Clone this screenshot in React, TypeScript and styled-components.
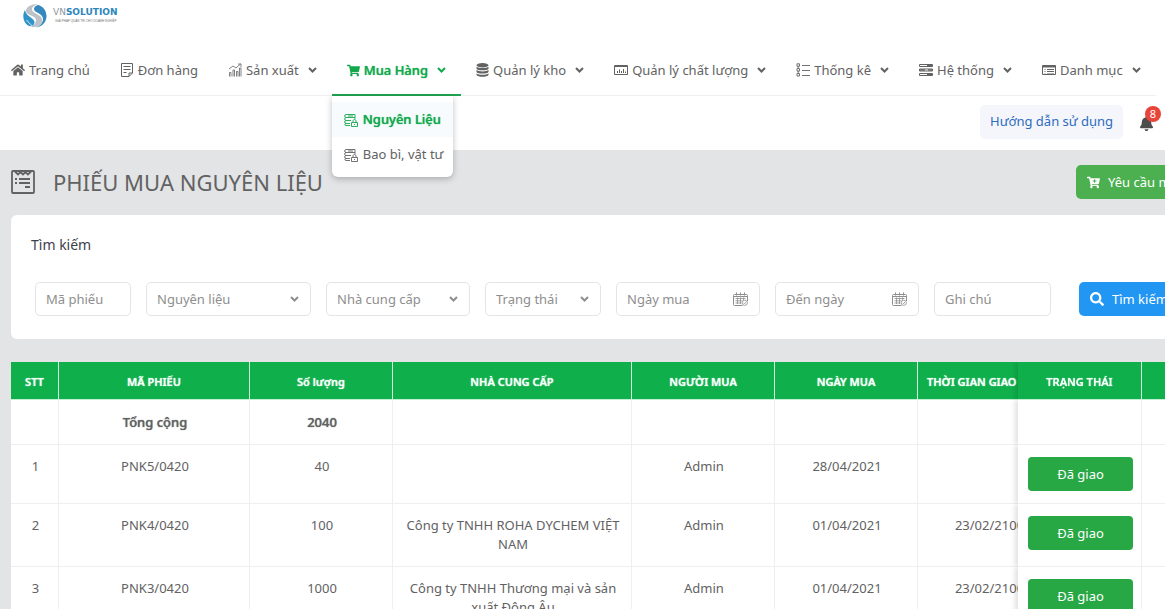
import React from "react";
import styled, { createGlobalStyle, css } from "styled-components";
import { FaHome, FaShoppingCart, FaBell, FaSearch, FaCartPlus } from "react-icons/fa";

const Global = createGlobalStyle`
  *, *::before, *::after { box-sizing: border-box; }
  body {
    margin: 0;
    background: #e2e4e6;
    color: #626262;
    font-family: "Noto Sans", "Open Sans", sans-serif;
    font-size: 13px;
    line-height: 19px;
  }
  button, input, select { font: inherit; }
  a { color: inherit; text-decoration: none; }
`;

const heavy = css`
  font-weight: 500;
  text-shadow: 0 0 1px currentColor;
`;

const Page = styled.div`
  overflow-x: hidden;
`;

const Header = styled.header`
  background: #fff;
`;

const Brand = styled.a`
  display: flex;
  align-items: center;
  gap: 6px;
  height: 44px;
  padding: 0 23px 13px;
`;

const BrandText = styled.span`
  display: flex;
  flex-direction: column;
  gap: 2px;
`;

const BrandName = styled.span`
  color: #8f969d;
  font: 9px/9px "DejaVu Sans", sans-serif;
  b { color: #2c86bb; }
`;

const BrandTag = styled.span`
  color: #777;
  font: 3px/4px "Liberation Sans", sans-serif;
  padding-left: 2px;
`;

const Nav = styled.nav`
  display: flex;
  height: 52px;
  margin: 0 9px 0 -4px;
  border-bottom: 1px solid #eef0f2;
`;

const NavItem = styled.div`
  position: relative;
  flex: none;
`;

const NavLink = styled.a<{ $active?: boolean }>`
  display: flex;
  align-items: center;
  gap: 4px;
  height: 52px;
  padding: 2px 15px 0;
  white-space: nowrap;
  border-bottom: 2px solid transparent;
  ${(p) => p.$active && css`
    ${heavy}
    color: #14a84c;
    border-color: #1fa550;
  `}
`;

const Chevron = styled.svg`
  flex: none;
  width: 9px;
  height: 6px;
  fill: none;
  stroke: currentColor;
  stroke-width: 2;
  margin-left: 5px;
`;

const Menu = styled.div`
  position: absolute;
  z-index: 5;
  top: 52px;
  left: 0;
  padding: 6px 0 5px;
  background: #fff;
  border-radius: 0 0 6px 6px;
  box-shadow: 0 2px 6px rgba(0, 0, 0, 0.25);
`;

const MenuLink = styled.a<{ $active?: boolean }>`
  display: flex;
  align-items: center;
  gap: 5px;
  height: 35px;
  padding: 0 10px 0 12px;
  white-space: nowrap;
  ${(p) => p.$active && css`
    ${heavy}
    color: #14a84c;
    background: #f7fbfe;
  `}
`;

const Tools = styled.div`
  display: flex;
  justify-content: flex-end;
  align-items: center;
  gap: 16px;
  height: 54px;
  padding: 0 11px 2px 0;
`;

const HelpLink = styled.a`
  padding: 7px 10px 8px;
  border-radius: 5px;
  background: #f5f6fb;
  color: #2d6bc0;
`;

const BellButton = styled.button`
  position: relative;
  display: flex;
  padding: 2px 0 0;
  border: 0;
  background: none;
  color: #4d4d4d;
`;

const Badge = styled.span`
  position: absolute;
  top: -8px;
  right: -7px;
  width: 16px;
  height: 16px;
  border-radius: 8px;
  background: #e8443a;
  color: #fff;
  font-size: 11px;
  line-height: 16px;
  text-align: center;
`;

const Main = styled.main`
  min-width: 1244px;
  padding: 0 11px 24px;
`;

const TitleRow = styled.div`
  display: flex;
  align-items: center;
  gap: 18px;
  height: 65px;
  padding-bottom: 1px;
`;

const Title = styled.h1`
  flex: 1;
  margin: 0;
  font-size: 22px;
  line-height: 30px;
  font-weight: 400;
`;

const Button = styled.button<{ $color: string; $width: number }>`
  display: flex;
  flex: none;
  align-items: center;
  gap: 8px;
  width: ${(p) => p.$width}px;
  height: 34px;
  padding: 0 11px;
  border: 0;
  border-radius: 5px;
  background: ${(p) => p.$color};
  color: #fff;
  white-space: nowrap;
`;

const SearchCard = styled.section`
  padding: 20px 24px 23px;
  border-radius: 6px;
  background: #fff;
`;

const CardTitle = styled.h2`
  margin: 0 0 28px -4px;
  color: #3c3f4c;
  font-size: 14px;
  line-height: 19px;
  font-weight: 400;
`;

const Filters = styled.form`
  display: flex;
  gap: 15px;
`;

const Field = styled.label<{ $w: number }>`
  position: relative;
  flex: ${(p) => p.$w} 1 ${(p) => p.$w}px;
  min-width: 0;
  color: #8e8e8e;
  svg {
    position: absolute;
    right: 12px;
    top: 50%;
    transform: translateY(-50%);
    pointer-events: none;
  }
`;

const control = css`
  width: 100%;
  height: 34px;
  padding: 0 10px;
  border: 1px solid #e3e4e6;
  border-radius: 5px;
  background: #fff;
  color: #8e8e8e;
  outline: none;
`;

const TextInput = styled.input`
  ${control}
  &::placeholder { color: #8e8e8e; opacity: 1; }
`;

const Select = styled.select`
  ${control}
  appearance: none;
`;

const SubmitSlot = styled.div`
  margin-left: 13px;
`;

const TableScroll = styled.div`
  margin-top: 23px;
  overflow-x: auto;
`;

const Table = styled.table`
  width: 100%;
  min-width: 1264px;
  table-layout: fixed;
  border-collapse: separate;
  border-spacing: 0;
  background: #fff;
`;

const sticky = css<{ $pin?: "status" | "last" }>`
  ${(p) => p.$pin && css`
    position: sticky;
    right: ${p.$pin === "status" ? 91 : 0}px;
  `}
  ${(p) => p.$pin === "status" && css`
    box-shadow: -3px 0 5px rgba(0, 0, 0, 0.12);
    clip-path: inset(0 0 0 -8px);
  `}
`;

const Th = styled.th<{ $pin?: "status" | "last" }>`
  height: 38px;
  padding: 2px 9px 0;
  background: #0fb04c;
  color: #f4fff8;
  border-right: 1px solid #d5f3e0;
  border-bottom: 1px solid #c4eed3;
  font-size: 11px;
  line-height: 18px;
  font-weight: 600;
  text-shadow: 0 0 1px currentColor;
  white-space: nowrap;
  ${sticky}
`;

const Td = styled.td<{ $pin?: "status" | "last" }>`
  padding: 12px 8px 12px 10px;
  border-right: 1px solid #efefef;
  border-bottom: 1px solid #efefef;
  background: #fff;
  text-align: center;
  vertical-align: top;
  ${sticky}
`;

const SumTd = styled(Td)`
  height: 45px;
  padding-top: 13px;
  ${heavy}
`;

const StatusButton = styled.button`
  display: block;
  width: 105px;
  height: 34px;
  border: 0;
  border-radius: 4px;
  background: #28a745;
  color: #fff;
`;

const StrokeIcon = styled.svg`
  flex: none;
  fill: none;
  stroke: currentColor;
`;

const Down = () => (
  <Chevron viewBox="0 0 9 6" aria-hidden="true">
    <path d="M1 1l3.500 3.500L8 1" />
  </Chevron>
);

const NoteIcon = () => (
  <StrokeIcon width="14" height="14" viewBox="0 0 14 14">
    <path d="M9 13.500H1.500v-13h11V10zM9 13.500V10h3.500M3.500 3.500h7M3.500 6.500h7M3.500 9.500h3" />
  </StrokeIcon>
);

const ChartIcon = () => (
  <StrokeIcon width="14" height="14" viewBox="0 0 14 14" strokeWidth="0.8">
    <path d="M1.500 13.500v-4h1.500v4M5 13.500V7h1.500v6.500M8.500 13.500V8.500H10v5M11.500 13.500V5H13v8.500M1 6l4-3 3 2 4.500-4M10 1h3v3" />
  </StrokeIcon>
);

const DiskIcon = () => (
  <svg width="13" height="14" viewBox="0 0 13 14" fill="currentColor" aria-hidden="true">
    <ellipse cx="6.500" cy="2.200" rx="6" ry="2.200" />
    <path d="M.5 3.800c2 1.700 10 1.700 12 0v2c-1 2-11 2-12 0z" />
    <path d="M.5 7.100c2 1.700 10 1.700 12 0v2c-1 2-11 2-12 0z" />
    <path d="M.5 10.400c2 1.700 10 1.700 12 0v1.600c-1 2.400-11 2.400-12 0z" />
  </svg>
);

const RackIcon = () => (
  <StrokeIcon width="14" height="14" viewBox="0 0 14 14">
    <path d="M.5 1.500h13v2H.5zM.5 6h13v2H.5zM.5 10.500h13v2H.5z" />
    <path d="M8 2.500h5M1 7h5M9 7h4M8 11.500h5" strokeWidth="1.500" />
  </StrokeIcon>
);

const QualityIcon = () => (
  <StrokeIcon width="14" height="14" viewBox="0 0 14 14">
    <path d="M.5 2.500h13v9H.5zM.5 3.500h13" />
    <path d="M3.500 10V8M5.500 10V6.500M7.500 10V8M9.500 10V6M11.500 10V8.500" />
  </StrokeIcon>
);

const ListIcon = () => (
  <StrokeIcon width="14" height="14" viewBox="0 0 14 14" strokeWidth="0.9">
    <path d="M1 .8h2.500v2.500H1zM1 5.600h2.500v2.500H1zM1 10.500h2.500V13H1zM2.200 3.300v2.300M2.200 8.100v2.400M6 2.500h8M6 7.500h8M6 12.500h8" />
  </StrokeIcon>
);

const CatalogIcon = () => (
  <StrokeIcon width="14" height="14" viewBox="0 0 14 14">
    <path d="M.5 2.500h13v9H.5z" />
    <path d="M.5 3.500h13" strokeWidth="2" />
    <path d="M2.500 6.500h1M5 6.500h7M2.500 8.500h1M5 8.500h7" />
    <path d="M2.500 10.500h1M5 10.500h7" strokeWidth="0.5" />
  </StrokeIcon>
);

const StockIcon = () => (
  <StrokeIcon width="14" height="14" viewBox="0 0 14 14" strokeWidth="0.9">
    <path d="M11 6V1.500H2C.2 1.500.2 4.500 2 4.500h9M7 7.500H2C.2 7.500.2 4.500 2 4.500M6 10.500H2c-1.800 0-1.800-3 0-3M6 12.500H2c-1.500 0-1.500-2 0-2M4 3h5" />
    <path d="M7.500 9.500h6v4h-6zM9 9.500V8c0-2 3-2 3 0v1.500M10.500 11v1" />
  </StrokeIcon>
);

const CalendarIcon = () => (
  <StrokeIcon width="15" height="14" viewBox="0 0 15 14" strokeWidth="0.8">
    <path d="M9.500 13.500h-8c-.6 0-1-.4-1-1v-9c0-.6.4-1 1-1h12c.6 0 1 .4 1 1V9" strokeWidth="1" />
    <path d="M.5 4.500h14M3.500.500v3M7.500.500v3M11.500.500v3" strokeWidth="1" />
    <path d="M2.500 6.500h10M2.500 8.800h7M2.500 11h6M4.500 5.500v6.500M7.500 5.500v6.500M10.500 5.500v2.500" />
    <circle cx="11.800" cy="10.800" r="2.600" />
    <path d="M10.500 10.800l1 1 1.600-2" />
  </StrokeIcon>
);

const TicketIcon = () => (
  <StrokeIcon width="24" height="24" viewBox="0 0 24 24" strokeWidth="1.800">
    <rect x="1" y="1" width="22" height="22" rx="1" />
    <path d="M4 1.500l3 3 2.500-2.500L12 4.500 14.500 2l2.500 2.500 3-3M4 9h2M8 9h11M4 13h2M8 13h11M14 17h5" />
  </StrokeIcon>
);

const Logo = () => (
  <svg width="24" height="24" viewBox="0 0 24 24" aria-hidden="true">
    <path d="M15 0C8 0 3 3 3 7c0 5 10 4 10 9 0 3-2 5-5 7 7 1 12-3 11-8-1-5-10-5-10-10 0-2 3-4 6-5z" fill="#bcc2c8" />
    <path d="M15 1c-3 1-4 2-4 4 0 4 9 4 9 10 0 4-3 7-7 8.500C19 23 23.500 18 23.500 12 23.500 7 20 2 15 1z" fill="#3588bd" />
    <path d="M2 6c-3 5-2 12 3 15.500 3 2 6 0 6.500-3C12 14 3 13 2 6z" fill="#2f93c8" />
    <path d="M3.500 16c2 3 4 3 5 6" fill="none" stroke="#fff" strokeWidth="0.8" />
  </svg>
);

const NAV = [
  { label: "Trang chủ", icon: <FaHome size={14} /> },
  { label: "Đơn hàng", icon: <NoteIcon /> },
  { label: "Sản xuất", icon: <ChartIcon />, menu: true },
  { label: "Mua Hàng", icon: <FaShoppingCart size={13} />, menu: true, active: true },
  { label: "Quản lý kho", icon: <DiskIcon />, menu: true },
  { label: "Quản lý chất lượng", icon: <QualityIcon />, menu: true },
  { label: "Thống kê", icon: <ListIcon />, menu: true },
  { label: "Hệ thống", icon: <RackIcon />, menu: true },
  { label: "Danh mục", icon: <CatalogIcon />, menu: true },
];

const FILTERS: { label: string; w: number; kind: "text" | "select" | "date" }[] = [
  { label: "Mã phiếu", w: 96, kind: "text" },
  { label: "Nguyên liệu", w: 165, kind: "select" },
  { label: "Nhà cung cấp", w: 144, kind: "select" },
  { label: "Trạng thái", w: 116, kind: "select" },
  { label: "Ngày mua", w: 144, kind: "date" },
  { label: "Đến ngày", w: 144, kind: "date" },
  { label: "Ghi chú", w: 117, kind: "text" },
];

const ROWS = [
  { id: 1, code: "PNK5/0420", qty: 40, supplier: "", date: "28/04/2021", due: "" },
  { id: 2, code: "PNK4/0420", qty: 100, supplier: "Công ty TNHH ROHA DYCHEM VIỆT NAM", date: "01/04/2021", due: "23/02/2100" },
  { id: 3, code: "PNK3/0420", qty: 1000, supplier: "Công ty TNHH Thương mại và sản xuất Đông Âu", date: "01/04/2021", due: "23/02/2100" },
];

const COLUMNS = [48, 191, 143, 239, 143, 143, 142, 124, 91];

export default function App() {
  return (
    <Page>
      <Global />
      <Header>
        <Brand href="#">
          <Logo />
          <BrandText>
            <BrandName>VN<b>SOLUTION</b></BrandName>
            <BrandTag>GIẢI PHÁP QUẢN TRỊ CHO DOANH NGHIỆP</BrandTag>
          </BrandText>
        </Brand>
        <Nav>
          {NAV.map((n) => (
            <NavItem key={n.label}>
              <NavLink href="#" $active={n.active}>
                {n.icon}
                {n.label}
                {n.menu && <Down />}
              </NavLink>
              {n.active && (
                <Menu>
                  <MenuLink href="#" $active><StockIcon />Nguyên Liệu</MenuLink>
                  <MenuLink href="#"><StockIcon />Bao bì, vật tư</MenuLink>
                </Menu>
              )}
            </NavItem>
          ))}
        </Nav>
        <Tools>
          <HelpLink href="#">Hướng dẫn sử dụng</HelpLink>
          <BellButton type="button" aria-label="Thông báo">
            <FaBell size={15} />
            <Badge>8</Badge>
          </BellButton>
        </Tools>
      </Header>
      <Main>
        <TitleRow>
          <TicketIcon />
          <Title>PHIẾU MUA NGUYÊN LIỆU</Title>
          <Button type="button" $color="#4caf50" $width={157}>
            <FaCartPlus size={13} />
            Yêu cầu mua hàng
          </Button>
        </TitleRow>
        <SearchCard>
          <CardTitle>Tìm kiếm</CardTitle>
          <Filters onSubmit={(e) => e.preventDefault()}>
            {FILTERS.map((f) => (
              <Field key={f.label} $w={f.w}>
                {f.kind === "select" ? (
                  <>
                    <Select aria-label={f.label}><option>{f.label}</option></Select>
                    <Down />
                  </>
                ) : (
                  <TextInput aria-label={f.label} placeholder={f.label} />
                )}
                {f.kind === "date" && <CalendarIcon />}
              </Field>
            ))}
            <SubmitSlot>
              <Button type="submit" $color="#2196f3" $width={130}>
                <FaSearch size={14} />
                Tìm kiếm
              </Button>
            </SubmitSlot>
          </Filters>
        </SearchCard>
        <TableScroll>
          <Table>
            <colgroup>
              {COLUMNS.map((w, i) => <col key={i} width={w} />)}
            </colgroup>
            <thead>
              <tr>
                <Th>STT</Th>
                <Th>MÃ PHIẾU</Th>
                <Th>Số lượng</Th>
                <Th>NHÀ CUNG CẤP</Th>
                <Th>NGƯỜI MUA</Th>
                <Th>NGÀY MUA</Th>
                <Th>THỜI GIAN GIAO HÀNG</Th>
                <Th $pin="status">TRẠNG THÁI</Th>
                <Th $pin="last" />
              </tr>
            </thead>
            <tbody>
              <tr>
                <SumTd />
                <SumTd>Tổng cộng</SumTd>
                <SumTd>2040</SumTd>
                <SumTd />
                <SumTd />
                <SumTd />
                <SumTd />
                <SumTd $pin="status" />
                <SumTd $pin="last" />
              </tr>
              {ROWS.map((r) => (
                <tr key={r.id}>
                  <Td>{r.id}</Td>
                  <Td>{r.code}</Td>
                  <Td>{r.qty}</Td>
                  <Td>{r.supplier}</Td>
                  <Td>Admin</Td>
                  <Td>{r.date}</Td>
                  <Td>{r.due}</Td>
                  <Td $pin="status"><StatusButton type="button">Đã giao</StatusButton></Td>
                  <Td $pin="last" />
                </tr>
              ))}
            </tbody>
          </Table>
        </TableScroll>
      </Main>
    </Page>
  );
}
